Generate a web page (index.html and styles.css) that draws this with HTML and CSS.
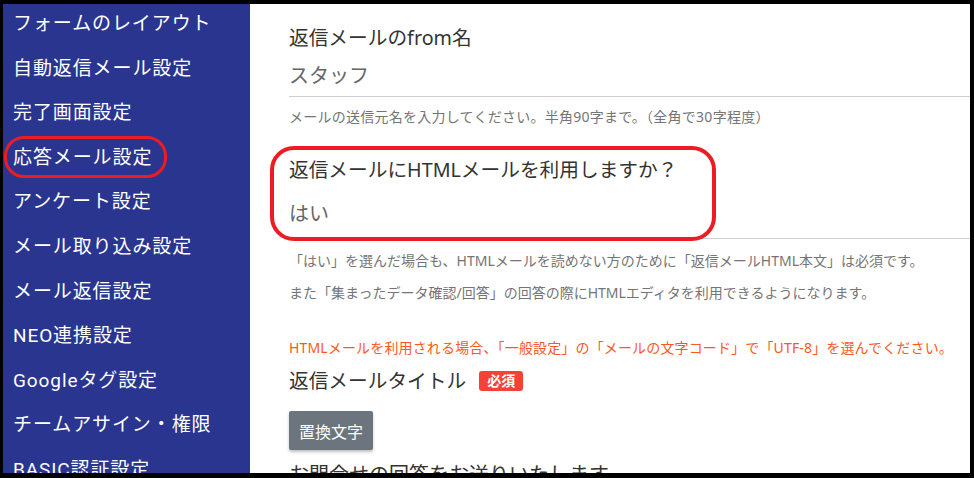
FILE: index.html
```html
<!DOCTYPE html>
<html lang="ja">
<head>
    <meta charset="UTF-8">
    <meta name="viewport" content="width=device-width, initial-scale=1.0">
    <title>応答メール設定</title>
    <link rel="stylesheet" href="styles.css">
</head>
<body>
    <div class="frame">
        <div class="screen">
            <nav class="sidebar">
                <ul class="menu">
                    <li>フォームのレイアウト</li>
                    <li>自動返信メール設定</li>
                    <li>完了画面設定</li>
                    <li>応答メール設定</li>
                    <li>アンケート設定</li>
                    <li>メール取り込み設定</li>
                    <li>メール返信設定</li>
                    <li>NEO連携設定</li>
                    <li>Googleタグ設定</li>
                    <li>チームアサイン・権限</li>
                    <li>BASIC認証設定</li>
                </ul>
            </nav>

            <div class="main">
                <div class="field">
                    <div class="field-label">返信メールのfrom名</div>
                    <div class="field-value">スタッフ</div>
                    <p class="help first">メールの送信元名を入力してください。半角90字まで。（全角で30字程度）</p>
                </div>

                <div class="field">
                    <div class="field-label">返信メールにHTMLメールを利用しますか？</div>
                    <div class="field-value select">はい</div>
                    <p class="help">「はい」を選んだ場合も、HTMLメールを読めない方のために「返信メールHTML本文」は必須です。</p>
                    <p class="help">また「集まったデータ確認/回答」の回答の際にHTMLエディタを利用できるようになります。</p>
                    <p class="warning">HTMLメールを利用される場合、「一般設定」の「メールの文字コード」で「UTF-8」を選んでください。</p>
                </div>

                <div class="field">
                    <div class="field-label">返信メールタイトル <span class="badge">必須</span></div>
                    <button class="btn-replace">置換文字</button>
                    <div class="field-text">お問合せの回答をお送りいたします</div>
                </div>
            </div>

            <div class="mark mark-menu"></div>
            <div class="mark mark-field"></div>
        </div>
    </div>
</body>
</html>
```

FILE: styles.css
```css
body {
    margin: 0;
    background-color: #000;
}
.frame {
    height: 478px;
    padding: 4px 4px 5px 3px;
    box-sizing: border-box;
}
.screen {
    position: relative;
    display: flex;
    height: 100%;
    overflow: hidden;
    background-color: #fff;
}
.sidebar {
    width: 247px;
    flex-shrink: 0;
    background-color: #2a3590;
}
.menu {
    list-style: none;
    margin: -2px 0 0;
    padding: 0;
}
.menu li {
    height: 44.6px;
    line-height: 44.6px;
    padding-left: 10px;
    color: #fff;
    font-family: Roboto, "Noto Sans CJK JP", sans-serif;
    font-size: 19px;
    letter-spacing: 0.9px;
    white-space: nowrap;
}
.main {
    flex: 1;
    padding: 20px 0 0 39px;
    font-family: "Noto Sans", "Noto Sans CJK JP", sans-serif;
    color: #333;
    white-space: nowrap;
}
.field-label {
    font-size: 19.7px;
    line-height: 28px;
}
.field-value {
    margin-top: 9px;
    padding-bottom: 5px;
    border-bottom: 1px solid #cfcfcf;
    font-size: 20px;
    line-height: 30px;
    color: #666;
}
.field-value.select {
    margin-top: 15px;
    padding-bottom: 9px;
}
.help {
    margin: 12px 0 0;
    font-size: 14px;
    line-height: 20px;
    color: #757575;
}
.help.first {
    margin: 10px 0 29px;
    letter-spacing: 0.25px;
}
.warning {
    margin: 35px 0 9px;
    font-size: 14px;
    line-height: 20px;
    letter-spacing: 0.15px;
    color: #ff5722;
}
.badge {
    display: inline-block;
    margin-left: 8px;
    padding: 0 8px;
    height: 20px;
    line-height: 20px;
    vertical-align: 2px;
    border-radius: 3px;
    background-color: #f44336;
    color: #fff;
    font-size: 14px;
    font-weight: bold;
}
.btn-replace {
    display: block;
    margin-top: 16px;
    height: 39px;
    padding: 0 10px;
    border: none;
    border-radius: 2px;
    background-color: #6c757d;
    color: #fff;
    font-family: "Noto Sans CJK JP", sans-serif;
    font-size: 16px;
    box-shadow: 0 2px 3px rgba(0,0,0,0.25);
}
.field-text {
    margin-top: 10px;
    font-size: 20px;
    line-height: 30px;
}
.mark {
    position: absolute;
    border: 3px solid #ed1c24;
    box-sizing: border-box;
    pointer-events: none;
}
.mark-menu {
    left: 1px;
    top: 132px;
    width: 163px;
    height: 42px;
    border-radius: 20px;
}
.mark-field {
    left: 267px;
    top: 142px;
    width: 446px;
    height: 95px;
    border-width: 4px;
    border-radius: 24px;
}
```
